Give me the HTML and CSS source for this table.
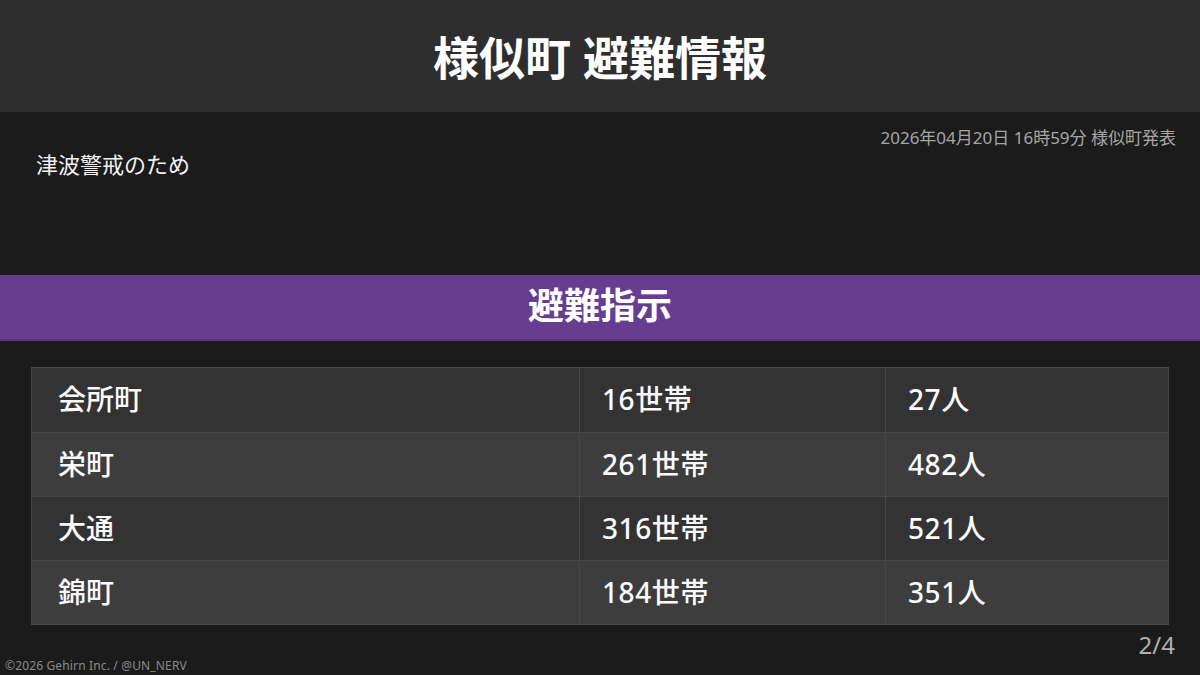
FILE: index.html
```html
<!DOCTYPE html>
<html lang="ja">
<head>
<meta charset="utf-8">
<link rel="stylesheet" href="styles.css">
</head>
<body>
<div class="page">
  <header class="header"><h1 class="title">様似町 避難情報</h1></header>
  <section class="info">
    <div class="issued">2026年04月20日 16時59分 様似町発表</div>
    <div class="reason">津波警戒のため</div>
  </section>
  <div class="band">避難指示</div>
  <div class="table-wrap">
    <div class="table">
      <div class="row odd"><div class="cell c1">会所町</div><div class="cell c2">16世帯</div><div class="cell c3">27人</div></div>
      <div class="row even"><div class="cell c1">栄町</div><div class="cell c2">261世帯</div><div class="cell c3">482人</div></div>
      <div class="row odd"><div class="cell c1">大通</div><div class="cell c2">316世帯</div><div class="cell c3">521人</div></div>
      <div class="row even"><div class="cell c1">錦町</div><div class="cell c2">184世帯</div><div class="cell c3">351人</div></div>
    </div>
  </div>
  <div class="footer">
    <span class="copy">©2026 Gehirn Inc. / @UN_NERV</span>
    <span class="pager">2/4</span>
  </div>
</div>
</body>
</html>
```
FILE: styles.css
```css
* { box-sizing: border-box; margin: 0; padding: 0; }
html, body { width: 1200px; height: 675px; overflow: hidden; }
body {
  background: #1b1b1b;
  color: #fff;
  font-family: "Noto Sans", "Noto Sans CJK JP", sans-serif;
}
.page { display: flex; flex-direction: column; height: 675px; }
.header {
  height: 112px;
  background: #2e2e2e;
  display: flex;
  align-items: center;
  justify-content: center;
}
.title { font-size: 46px; font-weight: 700; line-height: 1; padding-top: 2px; }
.info { height: 163px; padding: 0 24px 0 36px; }
.issued {
  text-align: right;
  font-size: 17px;
  color: #a6a6a6;
  line-height: 20px;
  padding-top: 16px;
}
.reason { font-size: 22px; line-height: 30px; color: #f2f2f2; margin-top: 1px; }
.band {
  height: 66px;
  background: #673d8f;
  border-bottom: 2px solid #5a3380;
  display: flex;
  align-items: center;
  justify-content: center;
  font-size: 36px;
  font-weight: 700;
  line-height: 1;
  padding-bottom: 2px;
}
.table-wrap { padding: 26px 31px 0 31px; }
.table { border: 1px solid #474747; }
.row { display: flex; height: 64px; border-top: 1px solid #474747; }
.row:first-child { border-top: none; }
.odd { background: #333333; }
.even { background: #3d3d3d; }
.cell {
  display: flex;
  align-items: center;
  font-size: 28px;
  font-weight: 500;
  line-height: 1;
  padding-bottom: 2px;
  color: #fafafa;
}
.c2, .c3 { letter-spacing: 0.6px; }
.c1 { width: 548px; padding-left: 26px; border-right: 1px solid #474747; }
.c2 { width: 306px; padding-left: 22px; border-right: 1px solid #474747; }
.c3 { flex: 1; padding-left: 22px; }
.footer { flex: 1; position: relative; }
.copy { position: absolute; left: 5px; bottom: 1px; font-size: 12px; letter-spacing: 0.15px; color: #8a8a8a; line-height: 16px; }
.pager { position: absolute; right: 25px; top: 5px; font-size: 24px; color: #b0b0b0; line-height: 30px; }
```
